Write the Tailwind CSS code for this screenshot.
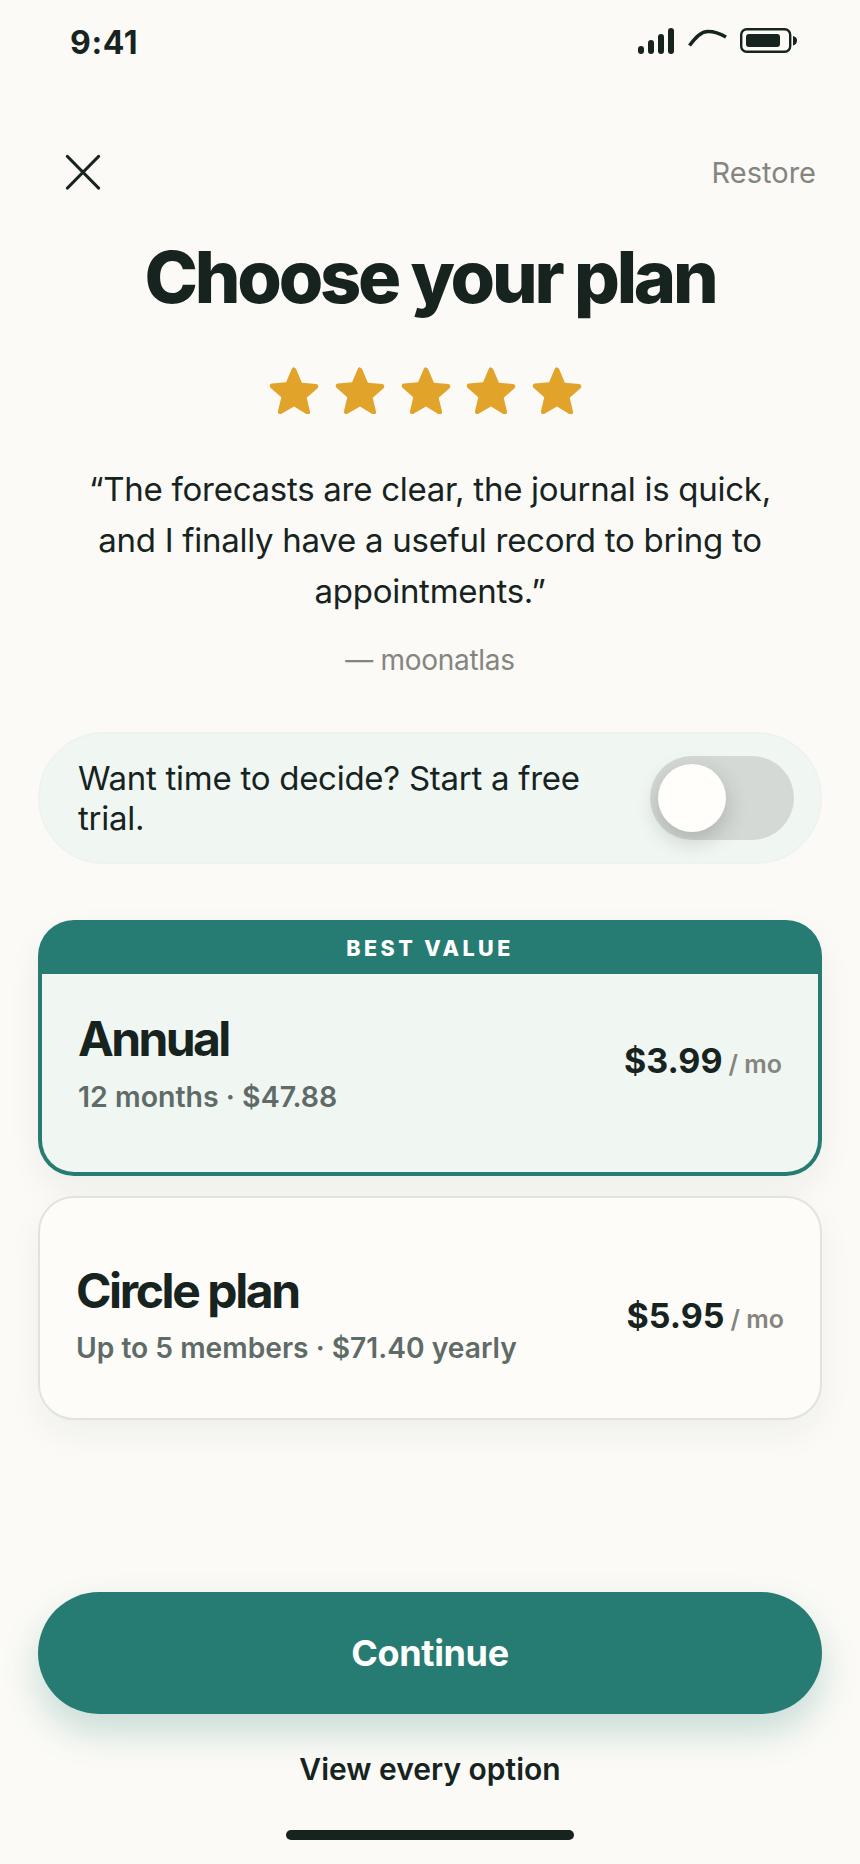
<!DOCTYPE html>
<html lang="en">
<head>
  <meta charset="UTF-8" />
  <title>Choose your plan</title>
  <script src="https://cdn.jsdelivr.net/npm/@tailwindcss/browser@4"></script>
</head>
<body class="bg-[#fbfaf6] font-['Inter',sans-serif] text-[#17231f]">
  <div class="flex h-[1864px] w-[860px] flex-col overflow-hidden">

    <!-- status bar -->
    <div class="flex h-[84px] items-start justify-between pl-[70px] pr-[62px] pt-[27px]">
      <span class="text-[32px] font-bold leading-[32px] tracking-[0.02em]">9:41</span>
      <div class="flex items-center pt-[1px]">
        <svg width="36" height="26" viewBox="0 0 36 26" fill="#17231f">
          <rect x="0" y="18" width="6" height="8" rx="3" />
          <rect x="10" y="12" width="6" height="14" rx="3" />
          <rect x="20" y="6" width="6" height="20" rx="3" />
          <rect x="30" y="0" width="6" height="26" rx="3" />
        </svg>
        <svg class="ml-[14px]" width="40" height="26" viewBox="0 0 40 26" fill="none">
          <path d="M1.5 17.5 C8 9 13 3.5 20 3.5 C26 3.5 32 5.5 38 9" stroke="#17231f" stroke-width="3.6" />
        </svg>
        <svg class="ml-[12px]" width="58" height="26" viewBox="0 0 58 26" fill="none">
          <rect x="1.2" y="1.2" width="49" height="22.6" rx="5.5" stroke="#17231f" stroke-width="2.4" />
          <rect x="6" y="6" width="34" height="13" rx="3" fill="#17231f" />
          <path d="M53 8 C56 8.5 57 10.5 57 12.5 C57 14.5 56 17 53 17.5 Z" fill="#17231f" />
        </svg>
      </div>
    </div>

    <!-- top actions -->
    <div class="mt-[68px] flex h-[40px] items-center justify-between pl-[65px] pr-[44px]">
      <svg width="36" height="36" viewBox="0 0 36 36" fill="none" stroke="#17231f" stroke-width="3.2" stroke-linecap="round">
        <path d="M2.5 2.5 L33.5 34" />
        <path d="M33.5 2.5 L2.5 34" />
      </svg>
      <span class="pt-[2px] text-[29px] leading-[36px] text-[#85857f]">Restore</span>
    </div>

    <h1 class="mt-[45px] text-center text-[72px] font-extrabold leading-[80px] tracking-[-0.045em]">Choose your plan</h1>

    <!-- stars -->
    <div class="mt-[49px] flex justify-center gap-[15.6px] pr-[9px]">
      <svg width="50" height="48" viewBox="0 0 24 23" fill="#e2a32b"><path d="M12 .8c.5 0 .9.3 1.1.8l2.7 6.4 6.8.6c1 .1 1.4 1.3.7 2l-5.2 4.6 1.6 6.7c.2 1-.8 1.7-1.7 1.2L12 19.4 6 22.9c-.9.5-1.9-.2-1.7-1.2l1.6-6.7-5.2-4.6c-.7-.7-.3-1.9.7-2l6.8-.6 2.7-6.4c.2-.5.6-.8 1.1-.8z" /></svg>
      <svg width="50" height="48" viewBox="0 0 24 23" fill="#e2a32b"><path d="M12 .8c.5 0 .9.3 1.1.8l2.7 6.4 6.8.6c1 .1 1.4 1.3.7 2l-5.2 4.6 1.6 6.7c.2 1-.8 1.7-1.7 1.2L12 19.4 6 22.9c-.9.5-1.9-.2-1.7-1.2l1.6-6.7-5.2-4.6c-.7-.7-.3-1.9.7-2l6.8-.6 2.7-6.4c.2-.5.6-.8 1.1-.8z" /></svg>
      <svg width="50" height="48" viewBox="0 0 24 23" fill="#e2a32b"><path d="M12 .8c.5 0 .9.3 1.1.8l2.7 6.4 6.8.6c1 .1 1.4 1.3.7 2l-5.2 4.6 1.6 6.7c.2 1-.8 1.7-1.7 1.2L12 19.4 6 22.9c-.9.5-1.9-.2-1.7-1.2l1.6-6.7-5.2-4.6c-.7-.7-.3-1.9.7-2l6.8-.6 2.7-6.4c.2-.5.6-.8 1.1-.8z" /></svg>
      <svg width="50" height="48" viewBox="0 0 24 23" fill="#e2a32b"><path d="M12 .8c.5 0 .9.3 1.1.8l2.7 6.4 6.8.6c1 .1 1.4 1.3.7 2l-5.2 4.6 1.6 6.7c.2 1-.8 1.7-1.7 1.2L12 19.4 6 22.9c-.9.5-1.9-.2-1.7-1.2l1.6-6.7-5.2-4.6c-.7-.7-.3-1.9.7-2l6.8-.6 2.7-6.4c.2-.5.6-.8 1.1-.8z" /></svg>
      <svg width="50" height="48" viewBox="0 0 24 23" fill="#e2a32b"><path d="M12 .8c.5 0 .9.3 1.1.8l2.7 6.4 6.8.6c1 .1 1.4 1.3.7 2l-5.2 4.6 1.6 6.7c.2 1-.8 1.7-1.7 1.2L12 19.4 6 22.9c-.9.5-1.9-.2-1.7-1.2l1.6-6.7-5.2-4.6c-.7-.7-.3-1.9.7-2l6.8-.6 2.7-6.4c.2-.5.6-.8 1.1-.8z" /></svg>
    </div>

    <!-- quote -->
    <p class="mx-auto mt-[50px] w-[720px] text-center text-[33px] leading-[51px] tracking-[-0.27px]">“The forecasts are clear, the journal is quick, and I finally have a useful record to bring to appointments.”</p>
    <p class="mt-[25px] text-center text-[28px] leading-[36px] tracking-[-0.3px] text-[#85857f]">— moonatlas</p>

    <!-- trial toggle -->
    <div class="mx-[38px] mt-[54px] flex h-[132px] shrink-0 items-center justify-between rounded-full border-2 border-[#edf4f0] bg-[#f0f6f2] pl-[38px] pr-[26px]">
      <p class="w-[520px] text-[33px] leading-[40px] tracking-[-0.27px]">Want time to decide? Start a free trial.</p>
      <div class="flex h-[84px] w-[144px] items-center rounded-full bg-[#d5d9d6] p-[8px]">
        <div class="h-[68px] w-[68px] rounded-full bg-[#fffefb] shadow-[0_8px_22px_rgba(23,35,31,0.22)]"></div>
      </div>
    </div>

    <!-- annual plan -->
    <div class="mx-[38px] mt-[56px] flex h-[256px] shrink-0 flex-col rounded-[36px] bg-[#267c72] p-[4px] pt-0 shadow-[0_14px_34px_rgba(23,35,31,0.06)]">
      <div class="flex h-[54px] shrink-0 items-center justify-center pt-[2px] text-[21.5px] font-extrabold tracking-[0.16em] text-white">BEST VALUE</div>
      <div class="flex flex-1 items-start justify-between rounded-b-[32px] bg-[#f0f6f2] px-[36px] pt-[39px]">
        <div>
          <div class="text-[48px] font-bold leading-[52px] tracking-[-0.055em]">Annual</div>
          <div class="mt-[14px] text-[28.5px] font-semibold leading-[36px] text-[#5f6b66]">12 months · $47.88</div>
        </div>
        <div class="mt-[26px] flex items-baseline gap-[6px]">
          <span class="text-[34px] font-bold leading-[44px]">$3.99</span>
          <span class="text-[25px] font-semibold leading-[32px] text-[#85857f]">/ mo</span>
        </div>
      </div>
    </div>

    <!-- circle plan -->
    <div class="mx-[38px] mt-[20px] flex h-[224px] shrink-0 items-center justify-between rounded-[36px] border-2 border-[#e3e3de] bg-[#fdfcf9] pl-[36px] pr-[36px] pt-[15px] shadow-[0_14px_34px_rgba(23,35,31,0.05)]">
      <div>
        <div class="text-[48px] font-bold leading-[52px] tracking-[-0.05em]">Circle plan</div>
        <div class="mt-[13px] text-[28.2px] font-semibold leading-[36px] text-[#5f6b66]">Up to 5 members · $71.40 yearly</div>
      </div>
      <div class="flex items-baseline gap-[6px]">
        <span class="text-[34px] font-bold leading-[44px]">$5.95</span>
        <span class="text-[25px] font-semibold leading-[32px] text-[#85857f]">/ mo</span>
      </div>
    </div>

    <!-- bottom actions -->
    <button class="mx-[38px] mt-auto flex h-[122px] shrink-0 items-center justify-center rounded-full bg-[#267c72] text-[36px] font-bold tracking-[-0.01em] text-white shadow-[0_18px_36px_rgba(38,124,114,0.24)]">Continue</button>
    <div class="mt-[35px] text-center text-[30px] font-semibold leading-[40px]">View every option</div>
    <div class="mx-auto mb-[24px] mt-[41px] h-[10px] w-[288px] shrink-0 rounded-full bg-[#17231f]"></div>
  </div>
</body>
</html>
